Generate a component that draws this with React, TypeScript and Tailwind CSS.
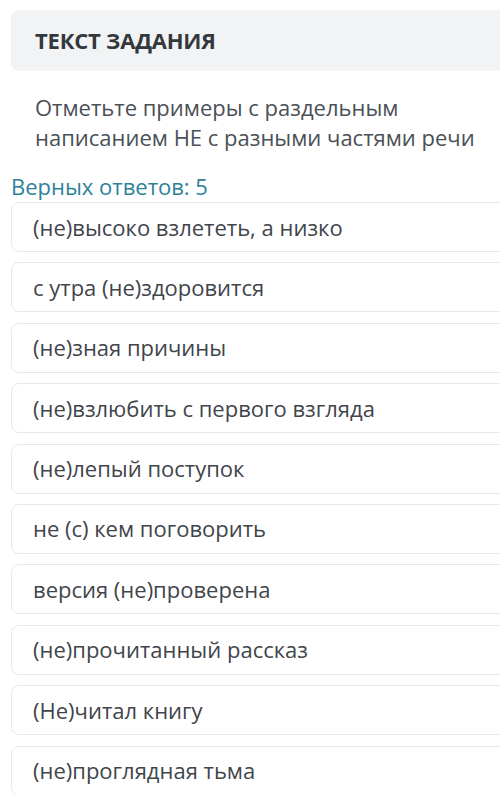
const options = [
  "(не)высоко взлететь, а низко",
  "с утра (не)здоровится",
  "(не)зная причины",
  "(не)взлюбить с первого взгляда",
  "(не)лепый поступок",
  "не (с) кем поговорить",
  "версия (не)проверена",
  "(не)прочитанный рассказ",
  "(Не)читал книгу",
  "(не)проглядная тьма",
];

export default function App() {
  return (
    <div className="w-[500px] h-[794px] overflow-hidden bg-white font-['Open_Sans',sans-serif] text-[#3c4248]">
      <div className="pt-[10px] pl-[11px]">
        {/* Task header */}
        <div className="h-[61px] -mr-4 rounded-l-lg bg-[#f2f3f5] pl-6 flex items-center">
          <h1 className="text-[22px] font-bold tracking-[-0.2px] text-[#33383d]">ТЕКСТ ЗАДАНИЯ</h1>
        </div>

        <p className="mt-[21px] pl-6 text-[22px] leading-[30px] text-[#4a5056]">
          Отметьте примеры с раздельным
          <br />
          написанием НЕ с разными частями речи
        </p>

        <div className="mt-[20px] text-[22px] leading-[28px] text-[#2e8199]">Верных ответов: 5</div>

        {/* Answer options */}
        <div className="mt-[2px] flex flex-col gap-[10.4px] -mr-4">
          {options.map((o) => (
            <div
              key={o}
              className="h-[50px] shrink-0 rounded-l-lg border border-[#e6e8eb] bg-white pl-[21px] flex items-center text-[22px] text-[#3f454b]"
            >
              {o}
            </div>
          ))}
        </div>
      </div>
    </div>
  );
}
